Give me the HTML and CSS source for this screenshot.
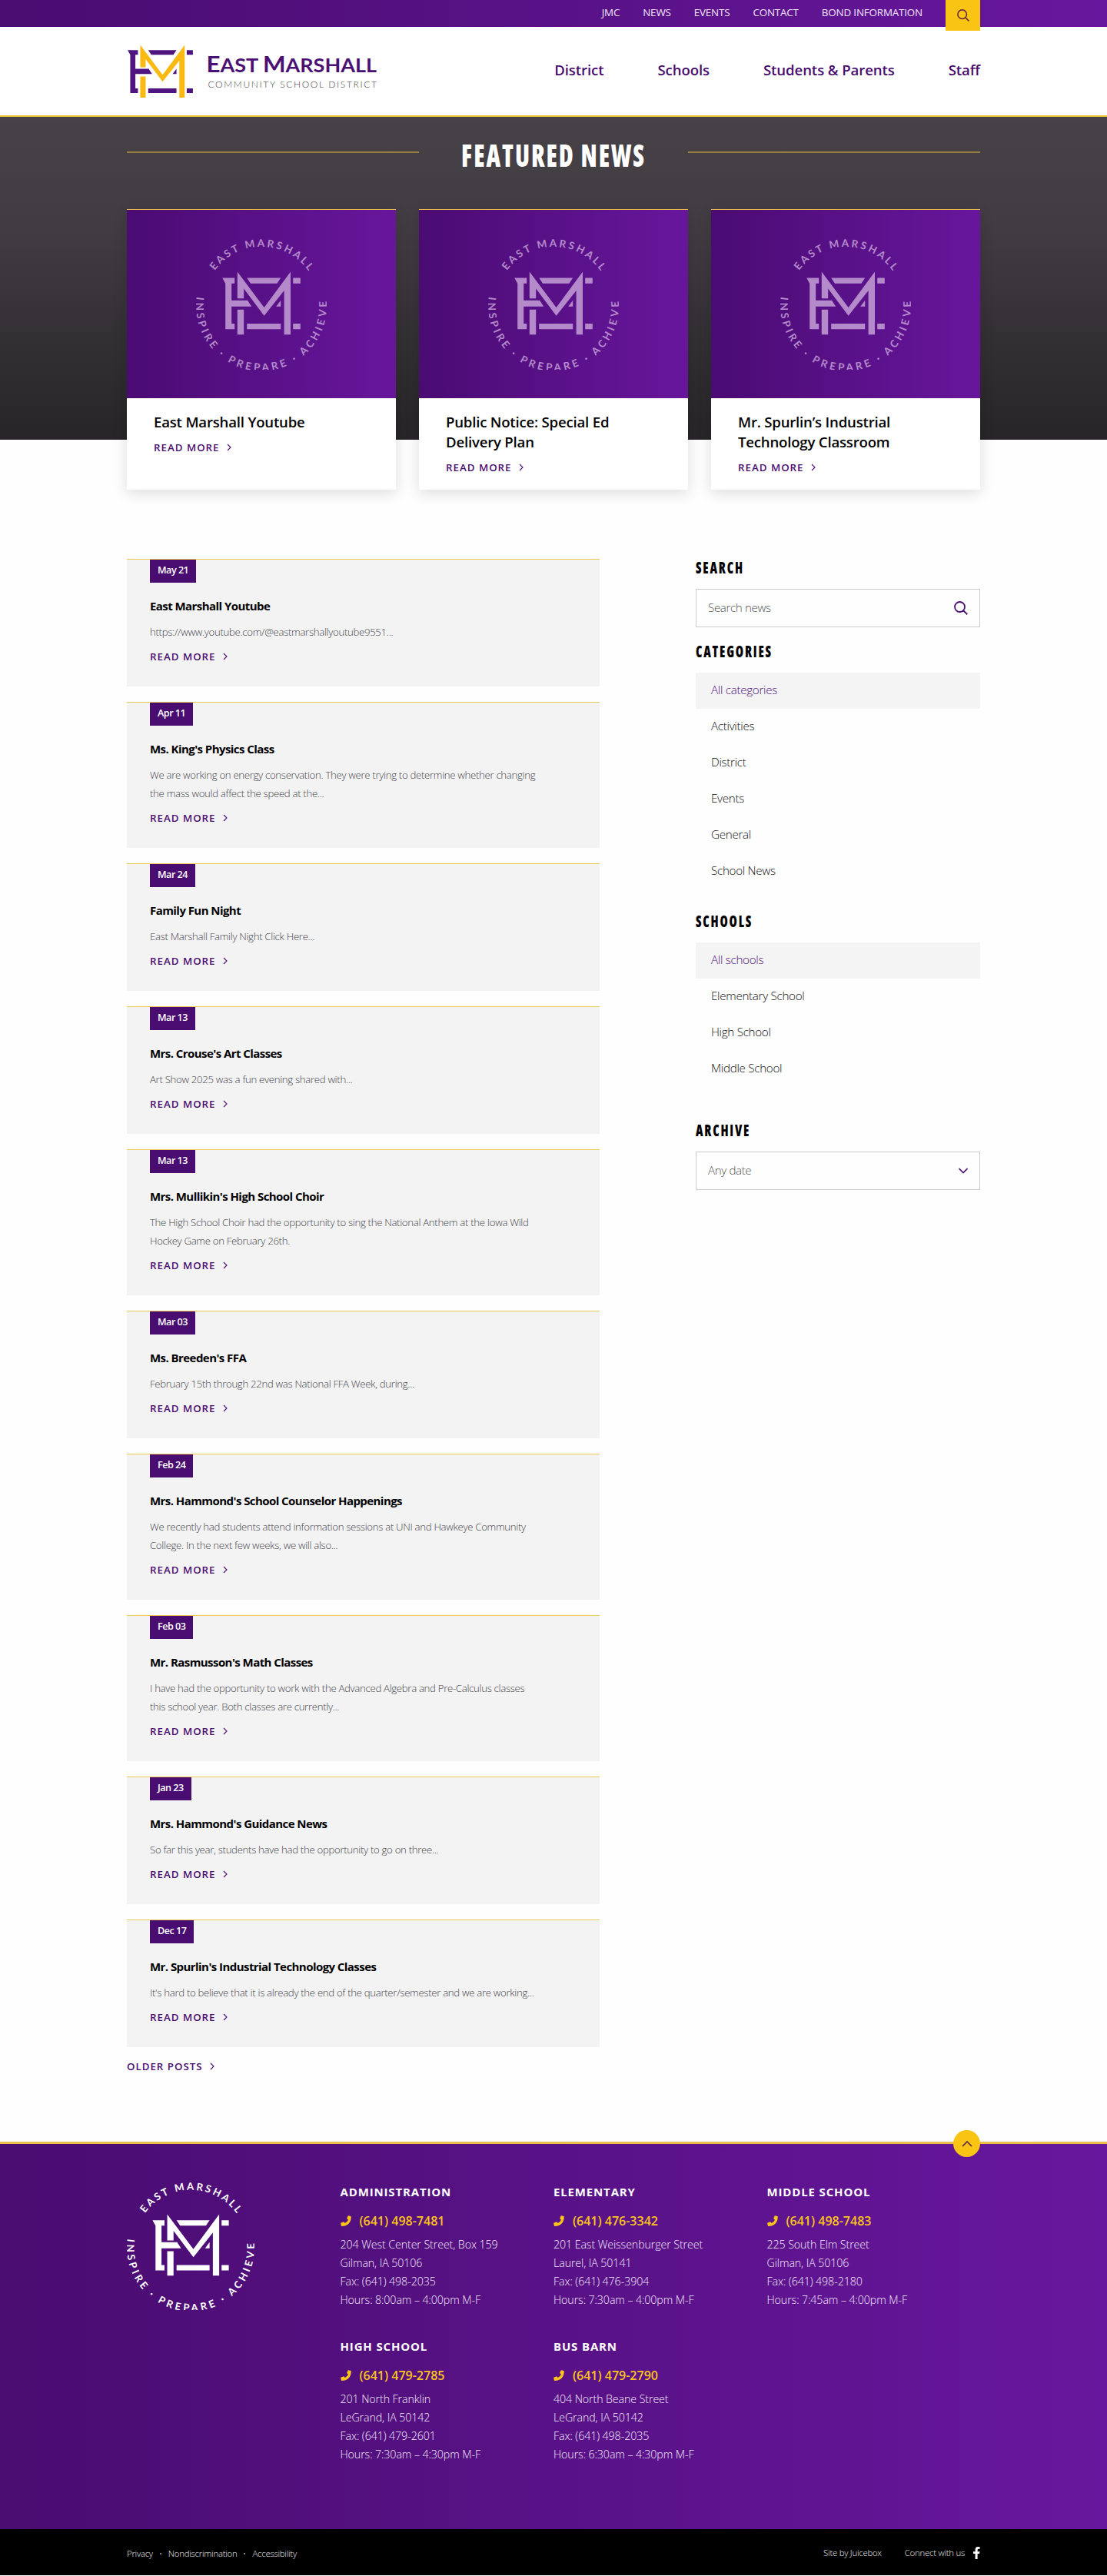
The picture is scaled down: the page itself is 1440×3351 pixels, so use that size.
FILE: index.html
```html
<!DOCTYPE html>
<html lang="en">
	<head>
		<meta charset="UTF-8" />
		<meta name="viewport" content="width=device-width, initial-scale=1.0" />
		<title>News - East Marshall Community School District</title>

		<link rel="stylesheet" href="styles.css">
	</head>

	<body>
		<!-- shared shapes -->
		<svg class="sprite">
			<symbol id="em" viewBox="48 175 254 205">
				<path fill="currentColor" d="M48 195H88V213H78V268H130L143 288H78V344H88V362H58V213ZM128 195H238L226 213H140ZM278 195H302V213H278ZM128 344H238V362H128ZM278 344H302V362H278ZM238 268V288H223Z" />
				<path class="em-m" d="M97 175L184 291L270 175V380H249V236L184 318L118 230V262H97ZM97 298H118V380H97Z" />
			</symbol>
			<symbol id="seal" viewBox="0 0 170 170">
				<path id="arc-top" fill="none" d="M24.3 41A75 75 0 0 1 146.6 42" />
				<path id="arc-bottom" fill="none" d="M0.8 75A85 85 0 1 0 169.2 75" />
				<text class="seal-text"><textPath href="#arc-top" textLength="142">EAST MARSHALL</textPath></text>
				<text class="seal-text"><textPath href="#arc-bottom" textLength="284">INSPIRE · PREPARE · ACHIEVE</textPath></text>
				<use href="#em" x="33.5" y="42.5" width="103" height="82" />
			</symbol>
			<symbol id="search" viewBox="0 0 18 18">
				<path fill="none" stroke="currentColor" stroke-width="1.8" d="M7.5 1A6.5 6.5 0 1 0 7.5 14A6.5 6.5 0 1 0 7.5 1M12 12L17.3 17.3" />
			</symbol>
			<symbol id="chevron" viewBox="0 0 6 10">
				<path fill="none" stroke="currentColor" stroke-width="1.1" d="M1 1L5 5L1 9" />
			</symbol>
			<symbol id="phone" viewBox="0 0 14 14">
				<path fill="currentColor" d="M10.3 0.2L13.2 0.9Q13.8 1 13.8 1.7Q13.6 8 10.2 10.9Q7 13.8 1.6 13.9Q1 13.9 0.8 13.3L0.2 10.5Q0.1 9.9 0.6 9.6L3.6 8.4Q4.1 8.2 4.5 8.6L5.7 10Q8.7 8.5 10 5.7L8.6 4.5Q8.2 4.2 8.4 3.6L9.6 0.6Q9.8 0.1 10.3 0.2Z" />
			</symbol>
		</svg>

		<div class="topbar">
			<div class="container topbar-inner">
				<a href="#">JMC</a>
				<a href="#">NEWS</a>
				<a href="#">EVENTS</a>
				<a href="#">CONTACT</a>
				<a href="#">BOND INFORMATION</a>
				<button class="topbar-search"><svg width="16" height="16"><use href="#search" /></svg></button>
			</div>
		</div>

		<header class="header">
			<div class="container header-inner">
				<svg class="logo" width="326" height="70" viewBox="0 0 326 70">
					<use href="#em" class="logo-mark" x="1" y="0.5" width="85" height="68.5" />
					<text class="logo-name" x="103.5" y="35.5" textLength="221.5" lengthAdjust="spacingAndGlyphs"><tspan class="cap">E</tspan>AST <tspan class="cap">M</tspan>ARSHALL</text>
					<text class="logo-sub" x="105.5" y="56" textLength="219.5">COMMUNITY SCHOOL DISTRICT</text>
				</svg>
				<nav class="nav">
					<a href="#">District</a>
					<a href="#">Schools</a>
					<a href="#">Students &amp; Parents</a>
					<a href="#">Staff</a>
				</nav>
			</div>
		</header>

		<section class="featured">
			<div class="container">
				<div class="featured-heading">
					<h1>FEATURED NEWS</h1>
				</div>
				<div class="cards">
					<article class="card">
						<div class="card-image"><svg width="170" height="170"><use href="#seal" /></svg></div>
						<div class="card-body">
							<h2>East Marshall Youtube</h2>
							<a class="more" href="#">READ MORE <svg width="6" height="10"><use href="#chevron" /></svg></a>
						</div>
					</article>
					<article class="card">
						<div class="card-image"><svg width="170" height="170"><use href="#seal" /></svg></div>
						<div class="card-body">
							<h2>Public Notice: Special Ed<br />Delivery Plan</h2>
							<a class="more" href="#">READ MORE <svg width="6" height="10"><use href="#chevron" /></svg></a>
						</div>
					</article>
					<article class="card">
						<div class="card-image"><svg width="170" height="170"><use href="#seal" /></svg></div>
						<div class="card-body">
							<h2>Mr. Spurlin’s Industrial<br />Technology Classroom</h2>
							<a class="more" href="#">READ MORE <svg width="6" height="10"><use href="#chevron" /></svg></a>
						</div>
					</article>
				</div>
			</div>
		</section>

		<main class="container main">
			<div class="posts">
				<article class="post">
					<span class="date">May 21</span>
					<h3>East Marshall Youtube</h3>
					<p>https://www.youtube.com/@eastmarshallyoutube9551...</p>
					<a class="more" href="#">READ MORE <svg width="6" height="10"><use href="#chevron" /></svg></a>
				</article>
				<article class="post">
					<span class="date">Apr 11</span>
					<h3>Ms. King's Physics Class</h3>
					<p>We are working on energy conservation. They were trying to determine whether changing<br />the mass would affect the speed at the...</p>
					<a class="more" href="#">READ MORE <svg width="6" height="10"><use href="#chevron" /></svg></a>
				</article>
				<article class="post">
					<span class="date">Mar 24</span>
					<h3>Family Fun Night</h3>
					<p>East Marshall Family Night Click Here...</p>
					<a class="more" href="#">READ MORE <svg width="6" height="10"><use href="#chevron" /></svg></a>
				</article>
				<article class="post">
					<span class="date">Mar 13</span>
					<h3>Mrs. Crouse's Art Classes</h3>
					<p>Art Show 2025 was a fun evening shared with...</p>
					<a class="more" href="#">READ MORE <svg width="6" height="10"><use href="#chevron" /></svg></a>
				</article>
				<article class="post">
					<span class="date">Mar 13</span>
					<h3>Mrs. Mullikin's High School Choir</h3>
					<p>The High School Choir had the opportunity to sing the National Anthem at the Iowa Wild<br />Hockey Game on February 26th.</p>
					<a class="more" href="#">READ MORE <svg width="6" height="10"><use href="#chevron" /></svg></a>
				</article>
				<article class="post">
					<span class="date">Mar 03</span>
					<h3>Ms. Breeden's FFA</h3>
					<p>February 15th through 22nd was National FFA Week, during...</p>
					<a class="more" href="#">READ MORE <svg width="6" height="10"><use href="#chevron" /></svg></a>
				</article>
				<article class="post">
					<span class="date">Feb 24</span>
					<h3>Mrs. Hammond's School Counselor Happenings</h3>
					<p>We recently had students attend information sessions at UNI and Hawkeye Community<br />College. In the next few weeks, we will also...</p>
					<a class="more" href="#">READ MORE <svg width="6" height="10"><use href="#chevron" /></svg></a>
				</article>
				<article class="post">
					<span class="date">Feb 03</span>
					<h3>Mr. Rasmusson's Math Classes</h3>
					<p>I have had the opportunity to work with the Advanced Algebra and Pre-Calculus classes<br />this school year. Both classes are currently...</p>
					<a class="more" href="#">READ MORE <svg width="6" height="10"><use href="#chevron" /></svg></a>
				</article>
				<article class="post">
					<span class="date">Jan 23</span>
					<h3>Mrs. Hammond's Guidance News</h3>
					<p>So far this year, students have had the opportunity to go on three...</p>
					<a class="more" href="#">READ MORE <svg width="6" height="10"><use href="#chevron" /></svg></a>
				</article>
				<article class="post">
					<span class="date">Dec 17</span>
					<h3>Mr. Spurlin's Industrial Technology Classes</h3>
					<p>It's hard to believe that it is already the end of the quarter/semester and we are working...</p>
					<a class="more" href="#">READ MORE <svg width="6" height="10"><use href="#chevron" /></svg></a>
				</article>
				<a class="more older" href="#">OLDER POSTS <svg width="6" height="10"><use href="#chevron" /></svg></a>
			</div>
			<!-- /.posts -->

			<aside class="sidebar">
				<h4>SEARCH</h4>
				<div class="field">
					<span>Search news</span>
					<svg width="18" height="18"><use href="#search" /></svg>
				</div>

				<h4>CATEGORIES</h4>
				<ul class="filter">
					<li class="active">All categories</li>
					<li>Activities</li>
					<li>District</li>
					<li>Events</li>
					<li>General</li>
					<li>School News</li>
				</ul>

				<h4>SCHOOLS</h4>
				<ul class="filter filter-schools">
					<li class="active">All schools</li>
					<li>Elementary School</li>
					<li>High School</li>
					<li>Middle School</li>
				</ul>

				<h4>ARCHIVE</h4>
				<div class="field">
					<span>Any date</span>
					<svg width="12" height="8" viewBox="0 0 12 8"><path fill="none" stroke="currentColor" stroke-width="1.7" d="M0.5 1L6 6.5L11.5 1" /></svg>
				</div>
			</aside>
		</main>

		<footer class="footer">
			<div class="container footer-inner">
				<a class="to-top" href="#"><svg width="14" height="8" viewBox="0 0 14 8"><path fill="none" stroke="currentColor" stroke-width="1.7" d="M1 7L7 1L13 7" /></svg></a>
				<div class="footer-logo"><svg width="166" height="166"><use href="#seal" /></svg></div>
				<div class="schools">
					<div>
						<h5>ADMINISTRATION</h5>
						<a class="phone" href="#"><svg width="14" height="14"><use href="#phone" /></svg>(641) 498-7481</a>
						<p>204 West Center Street, Box 159<br />Gilman, IA 50106<br />Fax: (641) 498-2035<br />Hours: 8:00am – 4:00pm M-F</p>
					</div>
					<div>
						<h5>ELEMENTARY</h5>
						<a class="phone" href="#"><svg width="14" height="14"><use href="#phone" /></svg>(641) 476-3342</a>
						<p>201 East Weissenburger Street<br />Laurel, IA 50141<br />Fax: (641) 476-3904<br />Hours: 7:30am – 4:00pm M-F</p>
					</div>
					<div>
						<h5>MIDDLE SCHOOL</h5>
						<a class="phone" href="#"><svg width="14" height="14"><use href="#phone" /></svg>(641) 498-7483</a>
						<p>225 South Elm Street<br />Gilman, IA 50106<br />Fax: (641) 498-2180<br />Hours: 7:45am – 4:00pm M-F</p>
					</div>
					<div>
						<h5>HIGH SCHOOL</h5>
						<a class="phone" href="#"><svg width="14" height="14"><use href="#phone" /></svg>(641) 479-2785</a>
						<p>201 North Franklin<br />LeGrand, IA 50142<br />Fax: (641) 479-2601<br />Hours: 7:30am – 4:30pm M-F</p>
					</div>
					<div>
						<h5>BUS BARN</h5>
						<a class="phone" href="#"><svg width="14" height="14"><use href="#phone" /></svg>(641) 479-2790</a>
						<p>404 North Beane Street<br />LeGrand, IA 50142<br />Fax: (641) 498-2035<br />Hours: 6:30am – 4:30pm M-F</p>
					</div>
				</div>
			</div>
		</footer>

		<div class="legal">
			<div class="container legal-inner">
				<div class="legal-links">
					<a href="#">Privacy</a><i></i><a href="#">Nondiscrimination</a><i></i><a href="#">Accessibility</a>
				</div>
				<div class="legal-right">
					<a href="#">Site by Juicebox</a>
					<a href="#">Connect with us</a>
					<svg width="9" height="16" viewBox="0 0 9 16"><path fill="#fff" d="M2.6 16V9H0V6.2H2.6V4Q2.6 0 6.2 0Q7.8 0 8.6 0.2V2.7H7Q5.6 2.7 5.6 4.1V6.2H8.5L8 9H5.6V16Z" /></svg>
				</div>
			</div>
		</div>
	</body>
</html>
```
FILE: styles.css
```css
* {
	box-sizing: border-box;
}

body {
	background: #fefefe;
	color: #000;
	font-family: "Open Sans", "Noto Sans", sans-serif;
	margin: 0;
}

h1,
h2,
h3,
h4,
h5,
p,
ul {
	margin: 0;
	padding: 0;
}

a {
	color: inherit;
	text-decoration: none;
}

svg {
	display: block;
	flex: none;
}

.sprite {
	display: none;
}

.container {
	margin: 0 auto;
	width: 1110px;
}

/* top bar */
.topbar {
	background: linear-gradient(90deg, #490c70, #67179d);
	height: 35px;
}

.topbar-inner {
	color: #f3e6fb;
	display: flex;
	font-size: 13.4px;
	gap: 30px;
	justify-content: flex-end;
	letter-spacing: -0.17px;
	line-height: 33px;
}

.topbar-search {
	align-items: center;
	background: #f9c413;
	border: 0;
	color: #6b2a3c;
	display: flex;
	height: 40px;
	justify-content: center;
	padding: 0;
	width: 45px;
}

/* header */
.header {
	background: #fff;
	border-bottom: 2px solid #eac62f;
	height: 117px;
}

.header-inner {
	display: flex;
	justify-content: space-between;
	padding-top: 23px;
}

.logo-mark {
	color: #4e1580;
}

.em-m {
	fill: var(--m, currentColor);
}

.logo {
	--m: #fbba12;
}

.logo-name {
	fill: #4a1173;
	font-family: Lato, sans-serif;
	font-size: 25px;
	font-weight: 700;
}

.logo-name .cap {
	font-size: 29px;
}

.logo-sub {
	fill: #444;
	font-family: Lato, sans-serif;
	font-size: 12px;
	font-weight: 300;
}

.nav {
	color: #470c6d;
	display: flex;
	font-size: 18.6px;
	font-weight: 600;
	gap: 70px;
	letter-spacing: -0.1px;
	line-height: 30px;
	padding-top: 18px;
}

/* featured news */
.featured {
	background: linear-gradient(180deg, #474248 0%, #403c41 35%, #272528 100%) no-repeat;
	background-size: 100% 420px;
}

.featured-heading {
	align-items: center;
	display: grid;
	gap: 30px;
	grid-template-columns: 380px 290px 380px;
	height: 120px;
}

.featured-heading::before,
.featured-heading::after {
	background: #97803f;
	content: "";
	height: 2px;
	margin-bottom: 28px;
}

.featured-heading h1 {
	color: #fff;
	font-size: 41px;
	font-stretch: 75%;
	font-weight: 800;
	letter-spacing: 2.5px;
	line-height: 48px;
	margin: 0 -20px 23px;
	text-align: center;
	transform: scaleX(0.79);
	white-space: nowrap;
}

.cards {
	display: grid;
	gap: 30px;
	grid-template-columns: repeat(3, 1fr);
}

.card {
	background: #fff;
	border-top: 1px solid #edbb4c;
	box-shadow: 0 5px 18px rgba(0, 0, 0, 0.13);
	height: 365px;
}

.card-image {
	align-items: center;
	background: linear-gradient(90deg, #4a0b73, #67169c);
	color: #b48acb;
	display: flex;
	height: 245px;
	justify-content: center;
}

.seal-text {
	fill: currentColor;
	font-family: Lato, sans-serif;
	font-size: 13.5px;
	font-weight: 700;
}

.card-body {
	padding: 18px 35px;
}

.card h2 {
	font-size: 18.6px;
	font-weight: 600;
	letter-spacing: -0.2px;
	line-height: 26px;
	margin-bottom: 8px;
}

.more {
	align-items: center;
	color: #4a0d70;
	display: flex;
	font-size: 13.3px;
	font-weight: 600;
	gap: 9px;
	letter-spacing: 1px;
	line-height: 24px;
}

/* news list */
.main {
	display: flex;
	justify-content: space-between;
	padding-top: 90px;
}

.posts {
	width: 615px;
}

.post {
	background: #f3f3f3;
	border-top: 1px solid #eacb54;
	margin-bottom: 20px;
	padding: 0 30px 27.5px;
}

.date {
	background: #490c70;
	color: #fff;
	display: block;
	font-size: 12.6px;
	font-weight: 600;
	height: 30px;
	letter-spacing: -0.5px;
	line-height: 28px;
	padding: 0 10px;
	width: fit-content;
}

.post h3 {
	font-size: 15px;
	font-weight: 700;
	letter-spacing: -0.56px;
	line-height: 24px;
	margin: 18px 0 10px;
}

.post p {
	color: #44444c;
	font-size: 13.2px;
	font-weight: 300;
	letter-spacing: -0.31px;
	line-height: 24px;
	margin-bottom: 7.5px;
	white-space: nowrap;
}

.older {
	margin-top: -7px;
}

/* sidebar */
.sidebar {
	width: 370px;
}

.sidebar h4 {
	font-size: 21px;
	font-stretch: 75%;
	font-weight: 800;
	letter-spacing: 2.3px;
	line-height: 23px;
	margin-bottom: 16px;
	transform: scaleX(0.79);
	transform-origin: left;
}

.field {
	align-items: center;
	border: 1px solid #ccc;
	color: #4a1173;
	display: flex;
	height: 50px;
	justify-content: space-between;
	margin-bottom: 20px;
	padding: 0 15px;
}

.field span {
	color: #555;
	font-size: 15.2px;
	font-weight: 300;
	letter-spacing: -0.4px;
	padding-bottom: 2px;
}

.filter {
	list-style: none;
	margin-bottom: 30px;
}

.filter-schools {
	margin-bottom: 45px;
}

.filter li {
	color: #111;
	font-size: 15.2px;
	font-weight: 300;
	height: 47px;
	letter-spacing: -0.3px;
	line-height: 45px;
	padding-left: 20px;
}

.filter .active {
	background: #f4f4f4;
	color: #4f127c;
}

/* footer */
.footer {
	background: linear-gradient(90deg, #490c70, #67179d);
	border-top: 3px solid #eac04a;
	height: 504px;
	margin-top: 86px;
}

.footer-inner {
	display: flex;
	padding-top: 50px;
	position: relative;
}

.to-top {
	align-items: center;
	background: #f9c413;
	border-radius: 50%;
	color: #5c2a4a;
	display: flex;
	height: 35px;
	justify-content: center;
	position: absolute;
	right: 0;
	top: -18px;
	width: 35px;
}

.footer-logo {
	color: #fff;
	width: 277.5px;
}

.schools {
	color: #f6ecfc;
	display: grid;
	grid-template-columns: repeat(3, 277.5px);
	row-gap: 35px;
	width: 832px;
}

.schools h5 {
	color: #fff;
	font-size: 15px;
	font-weight: 700;
	letter-spacing: 0.85px;
	line-height: 24px;
	margin-bottom: 14px;
}

.phone {
	align-items: center;
	color: #fdc41a;
	display: flex;
	font-size: 16px;
	font-weight: 600;
	gap: 11px;
	line-height: 24px;
	margin-bottom: 7px;
}

.schools p {
	font-size: 14.2px;
	font-weight: 300;
	letter-spacing: -0.08px;
	line-height: 24px;
	margin-bottom: 1px;
}

.legal {
	background: #000;
	color: #eee;
	font-size: 11.4px;
	font-weight: 300;
	height: 60px;
	letter-spacing: -0.25px;
	line-height: 20px;
}

.legal-inner {
	display: flex;
	justify-content: space-between;
	padding-top: 20px;
}

.legal-links {
	align-items: center;
	display: flex;
	padding-top: 2px;
}

.legal-links i {
	background: #aaa;
	border-radius: 50%;
	height: 2px;
	margin: 0 9px;
	width: 2px;
}

.legal-right {
	align-items: center;
	display: flex;
}

.legal-right a:first-child {
	margin-right: 30px;
}

.legal-right svg {
	margin-left: 11px;
}
```
